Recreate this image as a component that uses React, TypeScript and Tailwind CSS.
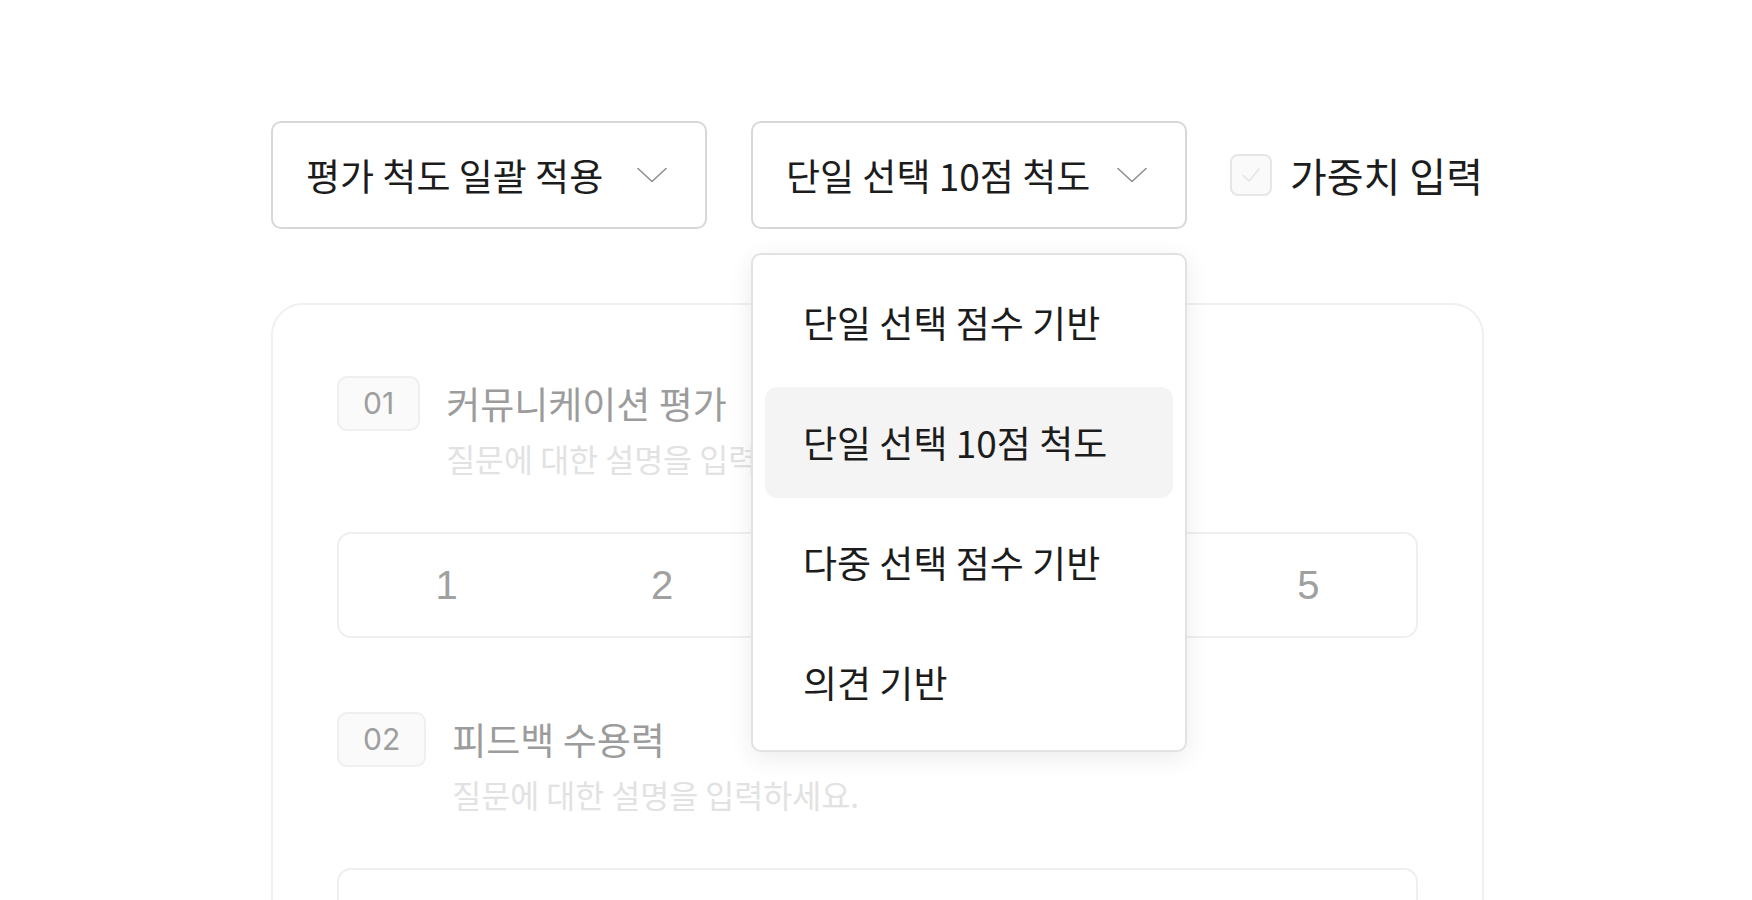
import React from 'react';

const FONT = { fontFamily: '"Noto Sans CJK KR", "Noto Sans", sans-serif' };

const Chevron = () => (
    <svg width="30" height="16" viewBox="0 0 30 16" fill="none">
        <polyline points="1,1.5 15,14.5 29,1.5" stroke="#8c8c8c" strokeWidth="1.5" strokeLinecap="round" strokeLinejoin="round" />
    </svg>
);

const SelectBox = ({ label }: { label: string }) => (
    <div className="w-[436px] h-[108px] border-2 border-[#d8d8d8] rounded-[10px] bg-white pl-[33px] pr-[38px] flex items-center justify-between">
        <span className="text-[37px] leading-[50px] text-[#1c1c1c]">{label}</span>
        <Chevron />
    </div>
);

const menuItems = ['단일 선택 점수 기반', '단일 선택 10점 척도', '다중 선택 점수 기반', '의견 기반'];

const ScaleMenu = ({ selected }: { selected: number }) => (
    <div className="absolute left-0 top-[132px] z-20 w-[436px] bg-white border-2 border-[#e2e2e2] rounded-[10px] p-[12px] flex flex-col gap-[9px] shadow-[0_6px_24px_rgba(0,0,0,0.08)]">
        {menuItems.map((item, i) => (
            <div
                key={item}
                className={`h-[111px] rounded-[12px] pl-[38px] flex items-center text-[37px] text-[#1c1c1c] ${i === selected ? 'bg-[#f4f4f4]' : ''}`}
            >
                {item}
            </div>
        ))}
    </div>
);

const Question = ({ no, title, showScale = true, className = '' }: { no: string; title: string; showScale?: boolean; className?: string }) => (
    <div className={className}>
        <div className="flex items-start gap-[26px]">
            <div
                className="h-[55px] px-[24px] border-2 border-[#efefef] bg-[#fafafa] rounded-[10px] flex items-center text-[30px] text-[#9e9e9e]"
                style={{ fontFamily: 'Inter, "Noto Sans", sans-serif' }}
            >
                {no}
            </div>
            <div className="flex flex-col">
                <span className="text-[37px] leading-[55px] text-[#9c9c9c]">{title}</span>
                <span className="mt-[6px] text-[31.5px] leading-[42px] text-[#e2e2e2]">질문에 대한 설명을 입력하세요.</span>
            </div>
        </div>
        <div
            className="mt-[53px] h-[106px] border-2 border-[#efefef] rounded-[14px] grid grid-cols-5 items-center text-center text-[40px] text-[#a0a0a0]"
            style={{ fontFamily: '"Liberation Sans", sans-serif' }}
        >
            {showScale && [1, 2, 3, 4, 5].map((n) => <span key={n}>{n}</span>)}
        </div>
    </div>
);

export default function App() {
    return (
        <div className="h-[900px] overflow-hidden bg-white" style={FONT}>
            <div className="w-[1213px] ml-[271px] pt-[121px]">
                {/* toolbar */}
                <div className="flex items-center">
                    <SelectBox label="평가 척도 일괄 적용" />
                    <div className="relative ml-[44px]">
                        <SelectBox label="단일 선택 10점 척도" />
                        <ScaleMenu selected={1} />
                    </div>
                    <div className="ml-[43px] flex items-center">
                        <div className="w-[42px] h-[42px] border-2 border-[#e6e6e6] bg-[#fafafa] rounded-[8px] flex items-center justify-center">
                            <svg width="22" height="18" viewBox="0 0 22 18" fill="none">
                                <polyline points="3,9.5 9,15 19,3" stroke="#e4e4e4" strokeWidth="1.6" strokeLinecap="round" strokeLinejoin="round" />
                            </svg>
                        </div>
                        <span className="ml-[18px] text-[40px] text-[#1c1c1c]">가중치 입력</span>
                    </div>
                </div>

                {/* question card */}
                <div className="mt-[74px] h-[700px] border-2 border-[#f0f0f0] rounded-t-[32px] px-[64px] pt-[71px]">
                    <Question no="01" title="커뮤니케이션 평가" />
                    <Question no="02" title="피드백 수용력" showScale={false} className="mt-[74px]" />
                </div>
            </div>
        </div>
    );
}
